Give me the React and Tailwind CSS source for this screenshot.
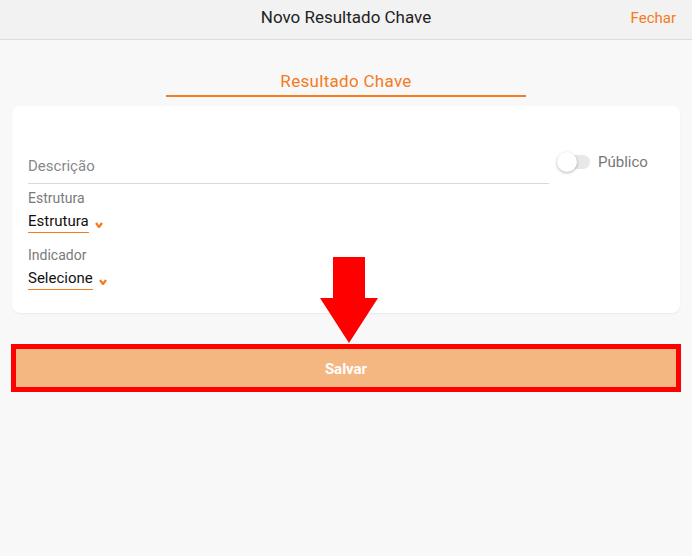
import React from 'react';

const Select = ({ label, value }) => {
    return (
        <div className="flex flex-col">
            <span className="text-[14px] leading-[18px] text-[#7a7a7a]">{label}</span>
            <div className="mt-[4px] flex items-center">
                <span className="border-b border-[#f47b20] pb-[1px] text-[15px] leading-[20px] text-[#111]">{value}</span>
                <svg className="ml-[6px] mt-[5px]" width="8" height="6" viewBox="0 0 8 6">
                    <path d="M1 1 L4 5 L7 1" fill="none" stroke="#f47b20" strokeWidth="2.2" strokeLinejoin="round" />
                </svg>
            </div>
        </div>
    );
};

export default function App() {
    return (
        <div className="relative min-h-[556px] bg-[#f8f8f8]" style={{ fontFamily: 'Roboto, "Liberation Sans", sans-serif' }}>
            {/* header */}
            <div className="grid h-[40px] grid-cols-[1fr_auto_1fr] items-center border-b border-[#dcdcdc] bg-[#f2f2f2] pb-[3px]">
                <div />
                <span className="text-[17px] text-[#222]">Novo Resultado Chave</span>
                <span className="pr-[16px] text-right text-[15px] text-[#f47b20]">Fechar</span>
            </div>

            {/* tab */}
            <div className="mx-auto mt-[31px] w-[360px] border-b-2 border-[#f47b20] pb-[4px] text-center text-[17px] leading-[20px] tracking-[0.3px] text-[#f47b20]">
                Resultado Chave
            </div>

            {/* card */}
            <div className="mx-[12px] mt-[9px] rounded-lg bg-white px-[16px] pb-[23px] pt-[50px] shadow-[0_1px_2px_rgba(0,0,0,0.06)]">
                <div className="flex items-start">
                    <div className="w-[521px] border-b border-[#d9d9d9] pb-[7px] text-[15px] leading-[20px] text-[#888]">
                        Descrição
                    </div>
                    <div className="ml-[8px] -mt-[5px] flex items-center">
                        <div className="relative h-[14px] w-[33px] rounded-full bg-[#e8e8e8]">
                            <div className="absolute -top-[3px] left-0 h-[20px] w-[20px] rounded-full bg-white shadow-[0_1px_3px_rgba(0,0,0,0.3)]" />
                        </div>
                        <span className="ml-[8px] text-[15px] text-[#777]">Público</span>
                    </div>
                </div>
                <div className="mt-[5px] flex flex-col gap-[13px]">
                    <Select label="Estrutura" value="Estrutura" />
                    <Select label="Indicador" value="Selecione" />
                </div>
            </div>

            {/* save button */}
            <div className="mx-[11px] mt-[31px] border-[5px] border-[#ff0000] bg-[#f5b781]">
                <div className="flex h-[38px] items-center justify-center pt-[2px] text-[15px] font-bold text-white">Salvar</div>
            </div>

            {/* arrow */}
            <svg className="absolute left-[320px] top-[257px]" width="58" height="86" viewBox="0 0 58 86">
                <polygon points="13,0 45,0 45,41 58,41 29,86 0,41 13,41" fill="#ff0000" />
            </svg>
        </div>
    );
}
